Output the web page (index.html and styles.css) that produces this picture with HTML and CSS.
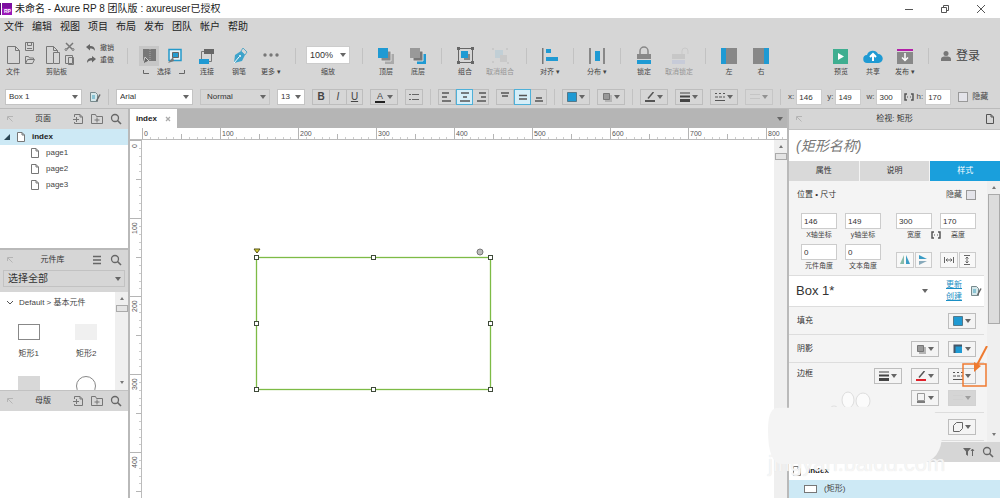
FILE: index.html
```
<!DOCTYPE html>
<html lang="zh-CN">
<head>
    <meta charset="UTF-8">
    <meta name="viewport" content="width=device-width, initial-scale=1.0">
    <title>未命名 - Axure RP 8</title>
    <link rel="stylesheet" href="styles.css">
</head>
<body>
    <!-- Shared icons -->
    <svg class="sprite" aria-hidden="true">
        <symbol id="page" viewBox="0 0 8 10"><path d="M.5 .5h4.500l2.500 2.500v6.500h-7zM5 .5v2.500h2.500" fill="#fff" stroke="#777"/></symbol>
        <symbol id="add-page" viewBox="0 0 12 12"><path d="M2.500 4V1.500h5.500l2.500 2.500v6.500h-8V9M8 1.500V4h2.500M1 6.500h6M4.500 4v5" fill="none" stroke="#777"/></symbol>
        <symbol id="add-folder" viewBox="0 0 12 12"><path d="M.5 10.500v-9h4l1 2h6v7zM3.500 7h5M6 4.500v5" fill="none" stroke="#777"/></symbol>
        <symbol id="search" viewBox="0 0 12 12"><circle cx="5" cy="5" r="3.500" fill="none" stroke="#666" stroke-width="1.300"/><path d="M7.500 7.500l3.500 3.500" stroke="#666" stroke-width="1.600"/></symbol>
        <symbol id="dock" viewBox="0 0 8 8"><path d="M1.500 5V1.500H5M2 2l4.500 4.500M4 1.500h3" fill="none" stroke="#b4b4b4"/></symbol>
        <symbol id="link" viewBox="0 0 10 8"><path d="M3 1H1v6h2M7 1h2v6H7" fill="none" stroke="#555" stroke-width="1.500"/><path d="M3 4h1M6 4h1" stroke="#555"/></symbol>
        <symbol id="style-edit" viewBox="0 0 12 12"><path d="M1.500 1.500h5l2 2v7h-7z" fill="#d5e7ea" stroke="#77898c"/><path d="M3 5h3M3 7h3" stroke="#3fa0bd"/><path d="M11 3.500L7.500 10" stroke="#666" stroke-width="1.500"/></symbol>
        <symbol id="fill" viewBox="0 0 10 10"><path d="M.5 .5h9v9h-9z" fill="#1f9ad3" stroke="#55798a"/></symbol>
        <symbol id="shadow" viewBox="0 0 10 10"><path d="M3 3h7v7H3z" fill="#b5b5b5"/><path d="M1.500 1.500h6v6h-6z" fill="#999" stroke="#777"/></symbol>
        <symbol id="weights" viewBox="0 0 10 10"><path d="M0 1h10" stroke="#444"/><path d="M0 4.500h10" stroke="#444" stroke-width="2"/><path d="M0 8.500h10" stroke="#444" stroke-width="3"/></symbol>
        <symbol id="dashes" viewBox="0 0 10 10"><path d="M0 1.500h10" stroke="#555" stroke-dasharray="2 2"/><path d="M0 5h10" stroke="#555" stroke-dasharray="3 1"/><path d="M0 8.500h10" stroke="#555"/></symbol>
        <symbol id="arrows" viewBox="0 0 10 10"><path d="M0 2.500h10M0 6.500h10" stroke="#bbb"/></symbol>
    </svg>

    <div class="app">
        <header class="title-bar">
            <svg class="logo" width="12" height="14" viewBox="0 0 12 14">
                <path d="M0 1h1v12H0z" fill="#5a0a78"/>
                <path d="M2 1h10v12H2z" fill="#9a18b8"/>
                <path d="M2 1h10v5H2z" fill="#7d0fa0"/>
                <text x="4" y="11" font-size="5" font-weight="bold" fill="#fff">RP</text>
            </svg>
            <h1>未命名 - Axure RP 8 团队版 : axureuser已授权</h1>
            <div class="window-buttons">
                <button type="button" aria-label="Minimize"><svg width="10" height="10" viewBox="0 0 10 10"><path d="M1 5.500h8" stroke="#555"/></svg></button>
                <button type="button" aria-label="Restore"><svg width="10" height="10" viewBox="0 0 10 10"><path d="M1.500 3.500h5v5h-5zM3.500 3V1.500h5v5H7" fill="none" stroke="#555"/></svg></button>
                <button type="button" aria-label="Close"><svg width="10" height="10" viewBox="0 0 10 10"><path d="M1 1l8 8M9 1L1 9" stroke="#555"/></svg></button>
            </div>
        </header>

        <nav class="menu">
            <a href="#">文件</a><a href="#">编辑</a><a href="#">视图</a><a href="#">项目</a><a href="#">布局</a><a href="#">发布</a><a href="#">团队</a><a href="#">帐户</a><a href="#">帮助</a>
        </nav>

        <!-- Main toolbar -->
        <div class="toolbar">
            <button type="button" class="tool file-tool">
                <svg width="30" height="24" viewBox="0 0 30 24" fill="none" stroke="#777">
                    <path d="M1.500 4.500h8l4 4v13h-12zM9.500 4.500v4h4"/>
                    <path d="M19.500 .5h8v8h-8zM21.500 1v2.500h4V1M21 6.500h5"/>
                    <path d="M19.500 21.500v-7h3l1 1.500h4v2M19.500 21.500l2-4h7l-2 4z"/>
                </svg>
                <span>文件</span>
            </button>
            <button type="button" class="tool file-tool">
                <svg width="30" height="24" viewBox="0 0 30 24" fill="none" stroke="#777">
                    <path d="M7 21.500H.5v-17h7l4 4V10M7.500 4.500v4h4"/>
                    <path d="M7.500 10.500h6v11h-6z"/>
                    <path d="M20 1l6 6M27 1l-6 6" stroke-width="1.500"/><circle cx="20" cy="7.500" r="1"/><circle cx="27" cy="7.500" r="1"/>
                    <path d="M19.500 13.500h7v8h-7zM22.500 15.500h5v7h-5z"/>
                </svg>
                <span>剪贴板</span>
            </button>
            <div class="history">
                <button type="button"><svg width="10" height="8" viewBox="0 0 10 8"><path d="M0 3l4-3v2c3 0 5 1 5 5C8 5 6 4.500 4 4.500v2z" fill="#666"/></svg>撤销</button>
                <button type="button"><svg width="10" height="8" viewBox="0 0 10 8"><path d="M10 3L6 0v2C3 2 1 3 1 7c1-2 3-2.500 5-2.500v2z" fill="#666"/></svg>重做</button>
            </div>
            <i class="sep"></i>
            <div class="select-tools">
                <div>
                    <button type="button" class="active" aria-label="相交选择"><svg width="20" height="20" viewBox="0 0 20 20"><path d="M4 3h13v12H4z" fill="#777"/><path d="M11 3v12" stroke="#aaa" stroke-dasharray="1 1"/><path d="M4 18l2-7 4 4z" fill="#666" stroke="#ccc"/></svg></button>
                    <button type="button" aria-label="包含选择"><svg width="20" height="20" viewBox="0 0 20 20"><path d="M4 3.500h12v11H4z" fill="#e9f2f6" stroke="#2499ca" stroke-width="1.500"/><path d="M7.500 6.500h6v5h-6z" fill="#269ccf" stroke="#666"/><path d="M3 17l5-6 1 4z" fill="#777"/></svg></button>
                </div>
                <p><svg width="6" height="4" viewBox="0 0 6 4"><path d="M.5 0v3.500H6" fill="none" stroke="#666"/></svg>选择<svg width="6" height="4" viewBox="0 0 6 4"><path d="M5.500 0v3.500H0" fill="none" stroke="#666"/></svg></p>
            </div>
            <button type="button" class="tool"><svg width="20" height="20" viewBox="0 0 20 20"><path d="M7 3h10v5H7z" fill="#666"/><path d="M2 13h10v5H2z" fill="#1f9ad3"/><path d="M7 5.500H4.500V13M14.500 8v7.500H12" fill="none" stroke="#777"/></svg><span>连接</span></button>
            <button type="button" class="tool"><svg width="20" height="20" viewBox="0 0 20 20"><path d="M5 17L6 9l6-4 4 4-3 6z" fill="#3da3cb"/><path d="M12 5l2-3 4 4-2 3z" fill="none" stroke="#5baac7"/><path d="M5 17l5-6" stroke="#fff"/><circle cx="11" cy="10" r="1" fill="#fff"/></svg><span>钢笔</span></button>
            <button type="button" class="tool menu-tool"><svg width="20" height="20" viewBox="0 0 20 20" fill="#777"><circle cx="4" cy="9" r="1.700"/><circle cx="10" cy="9" r="1.700"/><circle cx="16" cy="9" r="1.700"/></svg><span>更多</span></button>
            <i class="sep zoom-sep"></i>
            <label class="zoom"><select><option>100%</option></select>缩放</label>
            <i class="sep"></i>
            <button type="button" class="tool"><svg width="20" height="20" viewBox="0 0 20 20"><path d="M9 8h9v10H9z" fill="#aaa"/><path d="M5 5h10v10H5z" fill="#888" stroke="#ddd"/><path d="M2 2h10v10H2z" fill="#1f9ad3"/></svg><span>顶层</span></button>
            <button type="button" class="tool"><svg width="20" height="20" viewBox="0 0 20 20"><path d="M9 8h9v10H9z" fill="#1f9ad3"/><path d="M5 5h10v10H5z" fill="#777" stroke="#ddd"/><path d="M2 2h10v10H2z" fill="#999"/></svg><span>底层</span></button>
            <i class="sep"></i>
            <button type="button" class="tool"><svg width="20" height="20" viewBox="0 0 20 20"><path d="M3.500 2.500h14v14h-14z" fill="none" stroke="#666"/><path d="M2 1h3v3H2zM16 1h3v3h-3zM2 15h3v3H2zM16 15h3v3h-3z" fill="#666"/><path d="M9 8h6v6H9z" fill="#888"/><path d="M6 5h7v7H6z" fill="#1f9ad3"/></svg><span>组合</span></button>
            <button type="button" class="tool tool-long" disabled><svg width="20" height="20" viewBox="0 0 20 20"><path d="M5 4h8v8H5z" fill="#a9c8d6"/><path d="M10 9h7v7h-7z" fill="#bbb"/><path d="M2 2h2v2H2zM16 2h2v2h-2zM2 15h2v2H2zM17 16h2v2h-2z" fill="#bbb"/></svg><span>取消组合</span></button>
            <i class="sep"></i>
            <button type="button" class="tool menu-tool"><svg width="20" height="20" viewBox="0 0 20 20"><path d="M2 2h1.500v16H2z" fill="#777"/><path d="M6 3h5v4H6zM6 11h12v4H6z" fill="#1f9ad3"/></svg><span>对齐</span></button>
            <i class="sep"></i>
            <button type="button" class="tool menu-tool"><svg width="20" height="20" viewBox="0 0 20 20"><path d="M2 2h2v16H2zM16 2h2v16h-2z" fill="#888"/><path d="M8 5h5v10H8z" fill="#1f9ad3"/></svg><span>分布</span></button>
            <i class="sep"></i>
            <button type="button" class="tool"><svg width="20" height="20" viewBox="0 0 20 20"><path d="M6 8V5a4 4 0 0 1 8 0v3" fill="none" stroke="#888" stroke-width="1.500"/><path d="M3 8h14v5H3z" fill="#888"/><path d="M3 14h14v4H3z" fill="#1f9ad3"/></svg><span>锁定</span></button>
            <button type="button" class="tool tool-long" disabled><svg width="20" height="20" viewBox="0 0 20 20"><path d="M13 8V5a3 3 0 0 1 6 0v3" fill="none" stroke="#bbb"/><path d="M3 8h13v5H3z" fill="#b5b5b5"/><path d="M3 14h13v4H3z" fill="#b5bfdc"/></svg><span>取消锁定</span></button>
            <i class="sep"></i>
            <button type="button" class="tool"><svg width="20" height="20" viewBox="0 0 20 20"><path d="M2 2h5v16H2z" fill="#1f9ad3"/><path d="M7 2h11v16H7z" fill="#888"/></svg><span>左</span></button>
            <button type="button" class="tool"><svg width="20" height="20" viewBox="0 0 20 20"><path d="M2 2h11v16H2z" fill="#888"/><path d="M13 2h5v16h-5z" fill="#1f9ad3"/></svg><span>右</span></button>
            <div class="publish-tools">
                <button type="button" class="tool"><svg width="20" height="20" viewBox="0 0 20 20"><path d="M2 3h15v15H2z" fill="#3fae90"/><path d="M7 7l6 3.500L7 14z" fill="#fff"/></svg><span>预览</span></button>
                <button type="button" class="tool"><svg width="20" height="20" viewBox="0 0 20 20"><path d="M4.500 17a4 4 0 0 1-.5-8 6 6 0 0 1 11-1 4.500 4.500 0 0 1 .5 9z" fill="#1f9ad3"/><path d="M10 15V9M7 11l3-3 3 3" fill="none" stroke="#fff" stroke-width="2"/></svg><span>共享</span></button>
                <button type="button" class="tool menu-tool"><svg width="20" height="20" viewBox="0 0 20 20"><path d="M2 3h16v2H2z" fill="#b31fa8"/><path d="M2 6h16v12H2z" fill="#888"/><path d="M10 7v7M7 11.500l3 3 3-3" fill="none" stroke="#fff" stroke-width="1.500"/></svg><span>发布</span></button>
                <i class="sep"></i>
                <button type="button" class="login"><svg width="10" height="12" viewBox="0 0 10 12" fill="#777"><circle cx="5" cy="3.500" r="2.500"/><path d="M0 11V9c0-2 2-2.500 5-2.500S10 7 10 9v2z"/></svg>登录</button>
            </div>
        </div>

        <!-- Text and shape formatting -->
        <div class="format-bar">
            <select class="style-select" aria-label="Style"><option>Box 1</option></select>
            <button type="button" class="plain" aria-label="Edit style"><svg width="12" height="12"><use href="#style-edit"/></svg></button>
            <i class="sep"></i>
            <select class="font-select" aria-label="Font"><option>Arial</option></select>
            <select class="weight-select" aria-label="Weight"><option>Normal</option></select>
            <select class="size-select" aria-label="Size"><option>13</option></select>
            <div class="button-group">
                <button type="button"><b>B</b></button>
                <button type="button"><em>I</em></button>
                <button type="button"><u>U</u></button>
            </div>
            <button type="button" class="combo"><span class="font-color">A</span></button>
            <button type="button" class="list-button" aria-label="List"><svg width="10" height="8" viewBox="0 0 10 8"><path d="M0 1.500h2M3 1.500h7M0 6.500h2M3 6.500h7" stroke="#666"/></svg></button>
            <i class="sep"></i>
            <div class="button-group">
                <button type="button" aria-label="Left"><svg width="10" height="10" viewBox="0 0 10 10"><path d="M0 1h7M0 5h5M0 9h9" stroke="#555" stroke-width="1.500"/></svg></button>
                <button type="button" class="active" aria-label="Center"><svg width="10" height="10" viewBox="0 0 10 10"><path d="M1 1h8M3 5h4M0 9h10" stroke="#555" stroke-width="1.500"/></svg></button>
                <button type="button" aria-label="Right"><svg width="10" height="10" viewBox="0 0 10 10"><path d="M3 1h7M5 5h5M1 9h9" stroke="#555" stroke-width="1.500"/></svg></button>
            </div>
            <div class="button-group">
                <button type="button" aria-label="Top"><svg width="10" height="10" viewBox="0 0 10 10"><path d="M1 1h8M2 4h6" stroke="#555" stroke-width="1.500"/></svg></button>
                <button type="button" class="active" aria-label="Middle"><svg width="10" height="10" viewBox="0 0 10 10"><path d="M1 3.500h8M1 7h8" stroke="#555" stroke-width="1.500"/></svg></button>
                <button type="button" aria-label="Bottom"><svg width="10" height="10" viewBox="0 0 10 10"><path d="M2 6h6M1 9h8" stroke="#555" stroke-width="1.500"/></svg></button>
            </div>
            <i class="sep"></i>
            <button type="button" class="combo" aria-label="Fill"><svg width="10" height="10"><use href="#fill"/></svg></button>
            <button type="button" class="combo" aria-label="Shadow"><svg width="10" height="10"><use href="#shadow"/></svg></button>
            <i class="sep"></i>
            <button type="button" class="combo" aria-label="Line color"><svg width="10" height="10" viewBox="0 0 10 10"><path d="M8.500 0L3 6.500" stroke="#555" stroke-width="1.500"/><path d="M0 9h10" stroke="#555" stroke-width="2"/></svg></button>
            <button type="button" class="combo" aria-label="Line width"><svg width="10" height="10"><use href="#weights"/></svg></button>
            <button type="button" class="combo" aria-label="Line style"><svg width="10" height="10"><use href="#dashes"/></svg></button>
            <button type="button" class="combo" aria-label="Arrow style" disabled><svg width="10" height="10"><use href="#arrows"/></svg></button>
            <i class="sep"></i>
            <div class="coords">
                <label>x:<input type="text" value="146"></label>
                <label>y:<input type="text" value="149"></label>
                <label>w:<input type="text" value="300"></label>
                <svg width="10" height="8"><use href="#link"/></svg>
                <label>h:<input type="text" value="170"></label>
            </div>
            <label class="hide-box"><input type="checkbox">隐藏</label>
        </div>

        <main class="workspace">
            <aside class="left-side">
                <section class="pages">
                    <header class="panel-header">
                        <svg width="8" height="8"><use href="#dock"/></svg>
                        <h2>页面</h2>
                        <button type="button" aria-label="Add page"><svg width="12" height="12"><use href="#add-page"/></svg></button>
                        <button type="button" aria-label="Add folder"><svg width="12" height="12"><use href="#add-folder"/></svg></button>
                        <button type="button" aria-label="Search"><svg width="12" height="12"><use href="#search"/></svg></button>
                    </header>
                    <ul class="tree">
                        <li class="root selected"><svg width="6" height="6" viewBox="0 0 6 6"><path d="M6 0v6H0z" fill="#2a4654"/></svg><svg width="8" height="10"><use href="#page"/></svg><a href="#">index</a></li>
                        <li><svg width="8" height="10"><use href="#page"/></svg><a href="#">page1</a></li>
                        <li><svg width="8" height="10"><use href="#page"/></svg><a href="#">page2</a></li>
                        <li><svg width="8" height="10"><use href="#page"/></svg><a href="#">page3</a></li>
                    </ul>
                </section>

                <section class="library">
                    <header class="panel-header">
                        <svg width="8" height="8"><use href="#dock"/></svg>
                        <h2>元件库</h2>
                        <button type="button" aria-label="Menu"><svg width="12" height="12" viewBox="0 0 12 12"><path d="M2 2.500h8M2 6h8M2 9.500h8" stroke="#666" stroke-width="1.300"/></svg></button>
                        <button type="button" aria-label="Search"><svg width="12" height="12"><use href="#search"/></svg></button>
                    </header>
                    <div class="library-picker">
                        <select aria-label="元件库"><option>选择全部</option></select>
                    </div>
                    <div class="library-body">
                        <div class="widgets">
                            <h3><svg width="8" height="6" viewBox="0 0 8 6"><path d="M1 1l3 3 3-3" fill="none" stroke="#555"/></svg>Default &gt; 基本元件</h3>
                            <div class="widget-grid">
                                <figure><i class="shape outlined"></i><figcaption>矩形1</figcaption></figure>
                                <figure><i class="shape light"></i><figcaption>矩形2</figcaption></figure>
                                <figure><i class="shape dark"></i></figure>
                                <figure><i class="shape round"></i></figure>
                            </div>
                        </div>
                        <div class="scrollbar"><i class="up"></i><i class="thumb"></i><i class="down"></i></div>
                    </div>
                </section>

                <section class="masters">
                    <header class="panel-header">
                        <svg width="8" height="8"><use href="#dock"/></svg>
                        <h2>母版</h2>
                        <button type="button" aria-label="Add master"><svg width="12" height="12"><use href="#add-page"/></svg></button>
                        <button type="button" aria-label="Add folder"><svg width="12" height="12"><use href="#add-folder"/></svg></button>
                        <button type="button" aria-label="Search"><svg width="12" height="12"><use href="#search"/></svg></button>
                    </header>
                </section>
            </aside>

            <section class="editor">
                <div class="tabs">
                    <a href="#" class="tab">index <svg width="6" height="6" viewBox="0 0 6 6"><path d="M1 1l4 4M5 1L1 5" stroke="#aaa" stroke-width="1.300"/></svg></a>
                    <i class="caret"></i>
                </div>
                <svg class="ruler-x">
                    <defs>
                        <pattern id="ticks-x" x="12" width="78" height="12" patternUnits="userSpaceOnUse">
                            <path d="M.5 0v12M39.500 6v6" stroke="#b5b5b5"/>
                            <path d="M8.500 9v3M16.500 9v3M24.500 9v3M31.500 9v3M47.500 9v3M55.500 9v3M63.500 9v3M70.500 9v3" stroke="#ccc"/>
                        </pattern>
                    </defs>
                    <rect x="12" width="100%" height="12" fill="url(#ticks-x)"/>
                    <path d="M0 11.500h2000" stroke="#bbb"/>
                    <text x="14" y="8">0</text><text x="92" y="8">100</text><text x="170" y="8">200</text><text x="248" y="8">300</text><text x="326" y="8">400</text><text x="404" y="8">500</text><text x="482" y="8">600</text><text x="560" y="8">700</text><text x="638" y="8">800</text>
                </svg>
                <div class="stage">
                    <svg class="ruler-y">
                        <defs>
                            <pattern id="ticks-y" width="12" height="78" patternUnits="userSpaceOnUse">
                                <path d="M0 .5h12M6 39.500h6" stroke="#b5b5b5"/>
                                <path d="M9 8.500h3M9 16.500h3M9 24.500h3M9 31.500h3M9 47.500h3M9 55.500h3M9 63.500h3M9 70.500h3" stroke="#ccc"/>
                            </pattern>
                        </defs>
                        <rect width="12" height="100%" fill="url(#ticks-y)"/>
                        <path d="M11.500 0v2000" stroke="#bbb"/>
                        <g transform="rotate(-90)"><text x="-8" y="7">0</text><text x="-94" y="7">100</text><text x="-172" y="7">200</text><text x="-250" y="7">300</text><text x="-328" y="7">400</text></g>
                    </svg>
                    <svg class="canvas">
                        <rect x="114.500" y="117.500" width="234" height="132" fill="#fff" stroke="#7dbb46" stroke-width="1.300"/>
                        <path d="M112 109h6l-3 4z" fill="#d6cf2c" stroke="#55521a"/>
                        <circle cx="338" cy="112" r="3" fill="#bbb" stroke="#777"/>
                        <g fill="#fff" stroke="#3f4a3a">
                            <rect x="112.500" y="115.500" width="4" height="4"/><rect x="229.500" y="115.500" width="4" height="4"/><rect x="346.500" y="115.500" width="4" height="4"/>
                            <rect x="112.500" y="181.500" width="4" height="4"/><rect x="346.500" y="181.500" width="4" height="4"/>
                            <rect x="112.500" y="247.500" width="4" height="4"/><rect x="229.500" y="247.500" width="4" height="4"/><rect x="346.500" y="247.500" width="4" height="4"/>
                        </g>
                    </svg>
                    <div class="scrollbar"><i class="up"></i><i class="thumb"></i></div>
                </div>
            </section>

            <aside class="inspector">
                <header class="panel-header">
                    <svg width="8" height="8"><use href="#dock"/></svg>
                    <h2>检视: 矩形</h2>
                    <button type="button" aria-label="Page"><svg width="8" height="10" viewBox="0 0 8 10"><path d="M.5 .5h4.500l2.500 2.500v6.500h-7zM5 .5v2.500h2.500" fill="none" stroke="#555"/></svg></button>
                </header>
                <input type="text" class="shape-name" placeholder="(矩形名称)" aria-label="矩形名称">
                <div class="inspector-tabs">
                    <button type="button">属性</button>
                    <button type="button">说明</button>
                    <button type="button" class="active">样式</button>
                </div>
                <div class="inspector-body">
                    <div class="properties">
                        <div class="prop-row position-row">
                            <h3>位置 • 尺寸</h3>
                            <label class="hide-box">隐藏<input type="checkbox"></label>
                        </div>
                        <div class="fields">
                            <div class="pair">
                                <label><input type="text" value="146">X轴坐标</label>
                                <label><input type="text" value="149">y轴坐标</label>
                                <label><input type="text" value="0">元件角度</label>
                                <label><input type="text" value="0">文本角度</label>
                            </div>
                            <div class="pair">
                                <label><input type="text" value="300">宽度</label>
                                <svg class="ratio" width="10" height="8"><use href="#link"/></svg>
                                <label><input type="text" value="170">高度</label>
                                <div class="button-group">
                                    <button type="button" aria-label="Flip horizontal"><svg width="10" height="10" viewBox="0 0 10 10"><path d="M4 0v9H0z" fill="#8ba"/><path d="M6 0v9h4z" fill="#3b9cc5"/></svg></button>
                                    <button type="button" aria-label="Flip vertical"><svg width="10" height="10" viewBox="0 0 10 10"><path d="M1 0v4h8z" fill="#3b9cc5"/><path d="M1 10V6h8z" fill="#8ab"/></svg></button>
                                </div>
                                <div class="button-group last">
                                    <button type="button" aria-label="Fit width"><svg width="10" height="10" viewBox="0 0 10 10"><path d="M.5 2v6M9.500 2v6M2 5h6M3.500 3.500L2 5l1.500 1.500M6.500 3.500L8 5 6.500 6.500" fill="none" stroke="#666"/></svg></button>
                                    <button type="button" aria-label="Fit height"><svg width="10" height="10" viewBox="0 0 10 10"><path d="M2 .5h6M2 9.500h6M5 2v6M3.500 3.500L5 2l1.500 1.500M3.500 6.500L5 8l1.500-1.500" fill="none" stroke="#666"/></svg></button>
                                </div>
                            </div>
                        </div>
                        <div class="style-name">
                            <select aria-label="Widget style"><option>Box 1*</option></select>
                            <p><a href="#">更新</a><a href="#">创建</a></p>
                            <button type="button" class="plain" aria-label="Edit style"><svg width="12" height="12"><use href="#style-edit"/></svg></button>
                        </div>
                        <div class="prop-row">
                            <h3>填充</h3>
                            <button type="button" class="combo" aria-label="Fill"><svg width="10" height="10"><use href="#fill"/></svg></button>
                        </div>
                        <div class="prop-row">
                            <h3>阴影</h3>
                            <button type="button" class="combo" aria-label="Outer shadow"><svg width="10" height="10"><use href="#shadow"/></svg></button>
                            <button type="button" class="combo" aria-label="Inner shadow"><svg width="10" height="10" viewBox="0 0 10 10"><path d="M1 1h8v8H1z" fill="#1f9ad3"/><path d="M1.500 9V1.500H9" fill="none" stroke="#456" stroke-width="2"/></svg></button>
                        </div>
                        <div class="prop-row border-row">
                            <h3>边框</h3>
                            <div class="border-buttons">
                                <button type="button" class="combo" aria-label="Line width"><svg width="10" height="10"><use href="#weights"/></svg></button>
                                <button type="button" class="combo" aria-label="Line color"><svg width="10" height="10" viewBox="0 0 10 10"><path d="M8.500 0L3 6.500" stroke="#555" stroke-width="1.500"/><path d="M0 9h10" stroke="#e0202a" stroke-width="2"/></svg></button>
                                <div class="marked">
                                    <button type="button" class="combo" aria-label="Line style"><svg width="10" height="10"><use href="#dashes"/></svg></button>
                                    <svg class="callout" width="26" height="42" viewBox="0 0 26 42"><path d="M1 18h23v22H1z" fill="none" stroke="#ee7a30" stroke-width="1.500"/><path d="M25 0L15 19" stroke="#ee7a30" stroke-width="2"/><path d="M12 26l0-10 7 4z" fill="#ee7a30"/></svg>
                                </div>
                                <button type="button" class="combo second" aria-label="Visible borders"><svg width="10" height="10" viewBox="0 0 10 10"><path d="M1.500 .5h7v7h-7z" fill="none" stroke="#999"/><path d="M1 9h8" stroke="#555" stroke-width="1.500"/></svg></button>
                                <button type="button" class="combo" aria-label="Arrow style" disabled><svg width="10" height="10"><use href="#arrows"/></svg></button>
                            </div>
                        </div>
                        <div class="prop-row">
                            <button type="button" class="combo" aria-label="Visible corners"><svg width="10" height="10" viewBox="0 0 10 10"><path d="M.5 9.500v-6l3-3h6v6l-3 3z" fill="none" stroke="#666"/></svg></button>
                        </div>
                    </div>
                    <div class="scrollbar"><i class="up"></i><i class="thumb"></i><i class="down"></i></div>
                </div>
                <section class="outline">
                    <header class="panel-header">
                        <button type="button" aria-label="Filter"><svg width="12" height="12" viewBox="0 0 12 12"><path d="M0 2h8L5 5.500V10L3 8.500v-3z" fill="#666"/><path d="M9.500 3v7M8 5l1.500-2L11 5" fill="none" stroke="#666"/></svg></button>
                        <button type="button" aria-label="Search"><svg width="12" height="12"><use href="#search"/></svg></button>
                    </header>
                    <ul class="tree">
                        <li class="root"><svg width="8" height="10"><use href="#page"/></svg><a href="#">index</a></li>
                        <li class="selected"><i class="mini-box"></i><a href="#">(矩形)</a></li>
                    </ul>
                </section>
            </aside>
        </main>

        <!-- Site mark over the lower right corner -->
        <div class="site-mark">
            <span>jingyan.baidu.com</span>
            <svg width="180" height="90" viewBox="0 0 180 90">
                <g fill="#fbfbfb" stroke="#ddd">
                    <ellipse cx="80" cy="20" rx="6" ry="8"/><ellipse cx="95" cy="21" rx="7" ry="8"/><ellipse cx="66" cy="32" rx="5" ry="6"/>
                </g>
                <path d="M8 28Q0 30 0 50Q0 84 14 84H152Q174 80 174 54Q172 28 156 27Q80 26 8 28z" fill="#f4f4f4"/>
            </svg>
        </div>
    </div>
</body>
</html>
```

FILE: styles.css
```
* {
    box-sizing: border-box;
}

body {
    margin: 0;
    font-family: "Liberation Sans", "Noto Sans CJK SC", sans-serif;
    font-size: 8px;
    line-height: 12px;
    color: #444;
    background-color: #fff;
}

h1, h2, h3, p, ul, figure {
    margin: 0;
    padding: 0;
    font-weight: normal;
    font-size: 8px;
}

ul {
    list-style: none;
}

a {
    color: inherit;
    text-decoration: none;
}

svg {
    display: block;
    flex: none;
}

button, input, select {
    font: inherit;
    color: inherit;
    margin: 0;
    padding: 0;
    border: none;
    background: none;
    border-radius: 0;
}

input[type="text"] {
    min-width: 0;
    background-color: #fff;
    border: 1px solid #ccc;
    color: #333;
}

input[type="checkbox"] {
    appearance: none;
    width: 10px;
    height: 10px;
    border: 1px solid #999;
    background-color: #e4e4ea;
}

select {
    appearance: none;
    background: #fff url("data:image/svg+xml,%3Csvg xmlns='http://www.w3.org/2000/svg' width='6' height='4'%3E%3Cpath d='M0 0h6L3 4z' fill='%23666'/%3E%3C/svg%3E") no-repeat right 3px center;
    color: #333;
}

.sprite {
    position: absolute;
    width: 0;
    height: 0;
}

.app {
    position: relative;
    display: flex;
    flex-direction: column;
    height: 100vh;
    overflow: hidden;
}

/* Title and menu */
.title-bar {
    display: flex;
    align-items: center;
    height: 18px;
    gap: 3px;
    background-color: #fff;
}

.title-bar h1 {
    font-size: 10px;
    color: #222;
}

.window-buttons {
    display: flex;
    gap: 26px;
    margin-left: auto;
    padding-right: 14px;
}

.menu {
    display: flex;
    align-items: center;
    gap: 8px;
    height: 18px;
    padding-left: 4px;
    background-color: #d6d6d6;
    font-size: 10px;
    color: #222;
    flex: none;
}

/* Main toolbar */
.toolbar {
    display: flex;
    align-items: flex-start;
    height: 50px;
    padding: 10px 20px 0 6px;
    background-color: #d6d6d6;
    font-size: 7px;
    flex: none;
    white-space: nowrap;
}

.sep {
    flex: none;
    width: 1px;
    height: 16px;
    background-color: #c2c2c2;
}

.toolbar .sep {
    margin: 2px 7px;
}

.toolbar .zoom-sep {
    margin: 2px 10px 2px 8px;
}

.tool {
    display: flex;
    flex-direction: column;
    align-items: center;
    flex: none;
    width: 32px;
}

.tool:disabled {
    opacity: 0.45;
}

.tool-long {
    width: 38px;
}

.file-tool {
    align-items: flex-start;
    width: 40px;
    margin-top: -4px;
}

.menu-tool span::after {
    content: " ▾";
}

.history button {
    display: flex;
    align-items: center;
    gap: 4px;
}

.history {
    width: 34px;
    margin-top: -4px;
}

.select-tools {
    width: 52px;
    margin-left: 4px;
}

.select-tools div {
    display: flex;
    gap: 6px;
}

.select-tools .active {
    background-color: #c6c6c6;
}

.select-tools p {
    display: flex;
    align-items: center;
    justify-content: space-between;
    font-size: 7px;
    width: 42px;
    margin-left: 4px;
}

.zoom {
    display: flex;
    flex-direction: column;
    align-items: center;
    gap: 2px;
    flex: none;
    margin-right: 5px;
}

.zoom select {
    width: 44px;
    height: 18px;
    padding-left: 3px;
    font-size: 9px;
    border: 1px solid #ccc;
}

.publish-tools {
    display: flex;
    margin-left: auto;
}

.login {
    display: flex;
    align-items: center;
    gap: 5px;
    height: 20px;
    margin-left: 5px;
    font-size: 12px;
}

/* Format bar */
.format-bar {
    display: flex;
    align-items: center;
    gap: 7px;
    height: 22px;
    padding: 0 5px;
    background-color: #d6d6d6;
    flex: none;
    white-space: nowrap;
}

.format-bar select {
    height: 16px;
    padding-left: 3px;
    border: 1px solid #c4c4c4;
    flex: none;
}

.format-bar .style-select, .format-bar .font-select {
    width: 77px;
}

.format-bar .weight-select {
    width: 70px;
    padding-left: 6px;
    background-color: #d6d6d6;
}

.format-bar .size-select {
    width: 28px;
}

.button-group {
    display: flex;
    flex: none;
}

.button-group button, .list-button {
    display: flex;
    align-items: center;
    justify-content: center;
    width: 18px;
    height: 16px;
    border: 1px solid #bdbdbd;
    font-size: 10px;
}

.button-group button + button {
    width: 17px;
    border-left: none;
}

.button-group button:nth-child(3) {
    width: 16px;
}

.format-bar .button-group .active {
    background-color: #d5eef8;
    border: 1px solid #4eb0d8;
}

.combo {
    display: flex;
    align-items: center;
    justify-content: space-between;
    width: 28px;
    height: 16px;
    padding: 0 4px;
    border: 1px solid #bdbdbd;
    flex: none;
}

.combo::after, .caret {
    content: "";
    border: 3px solid transparent;
    border-top: 4px solid #666;
    border-bottom: none;
}

.combo:disabled {
    opacity: 0.6;
}

.font-color {
    width: 10px;
    line-height: 10px;
    font-size: 9px;
    text-align: center;
    border-bottom: 2px solid #222;
}

.coords {
    display: flex;
    align-items: center;
    gap: 5px;
}

.coords label {
    display: flex;
    align-items: center;
    gap: 2px;
}

.coords svg {
    margin: 0 -3px;
}

.coords input {
    width: 26px;
    height: 16px;
    padding-left: 2px;
}

.hide-box {
    display: flex;
    align-items: center;
    gap: 4px;
}

/* Panels */
.workspace {
    display: flex;
    flex: 1;
    min-height: 0;
    border-top: 1px solid #bbb;
}

.left-side {
    display: flex;
    flex-direction: column;
    flex: none;
    width: 130px;
    border-right: 2px solid #b9b9b9;
}

.panel-header {
    display: flex;
    align-items: center;
    gap: 7px;
    height: 20px;
    padding: 0 6px;
    background-color: #d6d6d6;
    flex: none;
}

.panel-header h2 {
    flex: 1;
    text-align: center;
    color: #333;
}

.pages {
    flex: none;
    height: 139px;
}

.tree li {
    display: flex;
    align-items: center;
    gap: 7px;
    height: 16px;
    padding-left: 31px;
}

.tree .root {
    padding-left: 4px;
    font-weight: bold;
    color: #222;
}

.tree .selected {
    background-color: #cde9f5;
}

.library {
    border-top: 2px solid #b9b9b9;
    flex: none;
}

.library-picker {
    padding: 0 3px 5px;
    background-color: #d6d6d6;
}

.library-picker select {
    width: 100%;
    height: 17px;
    padding-left: 4px;
    border: 1px solid #c2c2c2;
    background-color: #d6d6d6;
    font-size: 10px;
}

.library-body {
    display: flex;
    height: 98px;
    overflow: hidden;
}

.widgets {
    flex: 1;
}

.widgets h3 {
    display: flex;
    align-items: center;
    gap: 5px;
    height: 22px;
    padding-left: 6px;
}

.widget-grid {
    display: grid;
    grid-template-columns: 1fr 1fr;
    row-gap: 16px;
    padding-top: 10px;
}

.widget-grid figure {
    display: flex;
    flex-direction: column;
    align-items: center;
    gap: 8px;
}

.shape {
    width: 22px;
    height: 16px;
}

.outlined {
    border: 1px solid #888;
}

.light {
    background-color: #f0f0f0;
}

.dark {
    background-color: #d8d8d8;
}

.round {
    width: 20px;
    height: 20px;
    border: 1px solid #888;
    border-radius: 50%;
}

.masters {
    flex: 1;
    border-top: 1px solid #c2c2c2;
}

/* Scrollbars */
.scrollbar {
    display: flex;
    flex-direction: column;
    align-items: center;
    flex: none;
    width: 13px;
    background-color: #efefef;
}

.scrollbar .up {
    margin: 5px 0;
    border: 2px solid transparent;
    border-bottom: 3px solid #777;
    border-top: none;
}

.scrollbar .thumb {
    width: 12px;
    height: 7px;
    border: 1px solid #aaa;
    background-color: #e4e4e4;
}

.scrollbar .down {
    margin: auto 0 6px;
    border: 2px solid transparent;
    border-top: 3px solid #777;
    border-bottom: none;
}

/* Editor */
.editor {
    display: flex;
    flex-direction: column;
    flex: 1;
    min-width: 0;
}

.tabs {
    display: flex;
    align-items: center;
    justify-content: space-between;
    height: 19px;
    padding-right: 4px;
    background-color: #b5b5b5;
    flex: none;
}

.tab {
    display: flex;
    align-items: center;
    gap: 8px;
    height: 19px;
    padding: 0 6px;
    background-color: #fff;
    font-weight: bold;
    color: #222;
}

.ruler-x, .ruler-y {
    font-size: 7px;
    fill: #555;
}

.ruler-x {
    width: 100%;
    height: 12px;
}

.stage {
    display: flex;
    flex: 1;
    min-height: 0;
}

.ruler-y {
    width: 12px;
    height: 100%;
}

.canvas {
    flex: 1;
    min-width: 0;
    height: 100%;
}

/* Inspector */
.inspector {
    display: flex;
    flex-direction: column;
    flex: none;
    width: 213px;
    border-left: 2px solid #b9b9b9;
    background-color: #f4f4f4;
}

.inspector input.shape-name {
    height: 32px;
    padding-left: 7px;
    border: none;
    border-top: 1px solid #c2c2c2;
    font-size: 14px;
    font-style: italic;
}

.shape-name::placeholder {
    color: #777;
}

.inspector-tabs {
    display: grid;
    grid-template-columns: 1fr 1fr 1fr;
    gap: 1px;
    flex: none;
}

.inspector-tabs button {
    height: 20px;
    background-color: #d9d9d9;
    color: #333;
}

.inspector-tabs .active {
    background-color: #1a9fdc;
    color: #fff;
}

.inspector-body {
    display: flex;
    flex: 1;
    min-height: 0;
    overflow: hidden;
}

.properties {
    flex: 1;
    padding-right: 3px;
}

.inspector-body .thumb {
    height: 130px;
    background-color: #dcdcdc;
}

.prop-row {
    display: flex;
    align-items: center;
    justify-content: flex-end;
    gap: 9px;
    height: 28px;
    padding: 0 8px;
    border-bottom: 1px solid #ddd;
}

.prop-row h3 {
    margin-right: auto;
    color: #333;
}

.position-row {
    border: none;
}

.fields {
    display: flex;
    justify-content: space-between;
    padding: 4px 8px 0 12px;
}

.pair {
    display: grid;
    grid-template-columns: 36px 36px;
    column-gap: 8px;
    font-size: 7px;
}

.pair label {
    display: flex;
    flex-direction: column;
    align-items: center;
    height: 31px;
}

.pair input[type="text"] {
    width: 36px;
    height: 16px;
    padding-left: 2px;
    font-size: 8px;
}

.pair:last-child {
    grid-template-columns: 36px 8px 36px;
    column-gap: 0;
}

.pair .ratio {
    margin: 18px -1px 0;
}

.pair .button-group {
    gap: 1px;
}

.pair .last {
    grid-column: 3;
}

.pair .button-group button {
    width: 18px;
    border: 1px solid #ccc;
    background-color: #f8f8f8;
}

.style-name {
    display: flex;
    align-items: center;
    gap: 8px;
    height: 32px;
    padding: 0 2px 0 7px;
    background-color: #fff;
    border-top: 1px solid #ddd;
    border-bottom: 1px solid #ddd;
}

.style-name select {
    flex: 1;
    height: 24px;
    font-size: 13px;
    background-position: right 10px center;
}

.style-name a {
    display: block;
    color: #1a8fc4;
    text-decoration: underline;
}

.border-row {
    align-items: flex-start;
    height: 50px;
    padding-top: 5px;
}

.border-buttons {
    display: grid;
    grid-template-columns: 28px 28px 28px;
    gap: 6px 9px;
}

.border-buttons .second {
    grid-column: 2;
}

.border-buttons .combo:disabled {
    background-color: #c2c2c2;
}

.marked {
    position: relative;
}

.callout {
    position: absolute;
    left: 14px;
    top: -22px;
}

.outline {
    height: 56px;
    background-color: #fff;
    flex: none;
}

.outline .panel-header {
    justify-content: flex-end;
}

.outline .tree li {
    height: 18px;
    padding-left: 15px;
}

.outline .tree .root {
    padding-left: 4px;
}

.mini-box {
    width: 13px;
    height: 8px;
    border: 1px solid #777;
    background-color: #fff;
}

/* Site mark */
.site-mark {
    position: absolute;
    right: 52px;
    bottom: 28px;
    width: 180px;
    height: 90px;
    pointer-events: none;
}

.site-mark span {
    position: absolute;
    left: 0;
    bottom: 0;
    font-size: 22px;
    color: rgba(255, 255, 255, 0.7);
    text-shadow: 0 0 1px #ddd;
}

.site-mark svg {
    position: relative;
}
```
